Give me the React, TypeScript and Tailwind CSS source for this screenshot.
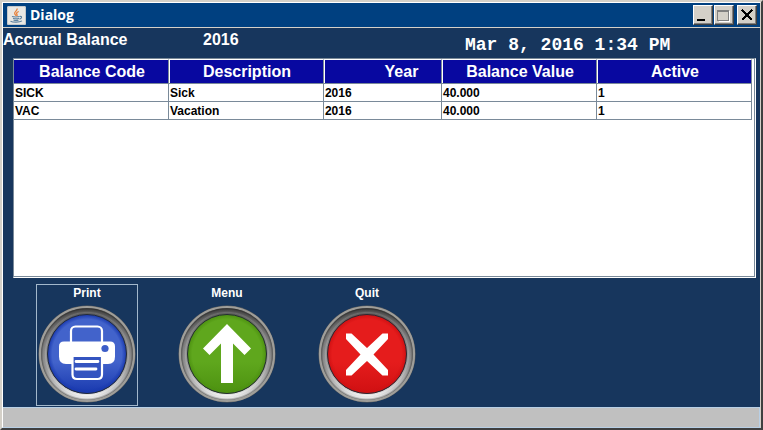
import { useState } from 'react';
import type { ReactNode } from 'react';

interface BalanceRow {
  code: string;
  description: string;
  year: string;
  value: string;
  active: string;
}

const rows: BalanceRow[] = [
  { code: 'SICK', description: 'Sick', year: '2016', value: '40.000', active: '1' },
  { code: 'VAC', description: 'Vacation', year: '2016', value: '40.000', active: '1' },
];

const columns = [
  { key: 'code', label: 'Balance Code', width: 'w-[21%]', pad: 'pl-[2px]' },
  { key: 'description', label: 'Description', width: 'w-[21%]', pad: 'pl-[2px]' },
  { key: 'year', label: 'Year', width: 'w-[16%]', pad: 'pl-[38px]' },
  { key: 'value', label: 'Balance Value', width: 'w-[21%]', pad: 'pl-[2px]' },
  { key: 'active', label: 'Active', width: 'w-[21%]', pad: 'pl-[2px]' },
] as const;

function JavaIcon() {
  return (
    <svg viewBox="0 0 19 19" className="h-[19px] w-[19px]" aria-hidden="true">
      <rect width="19" height="19" rx="1.5" fill="#e9e8e4" />
      <rect x="0.5" y="0.5" width="18" height="18" rx="1.5" fill="none" stroke="#c4c8ca" />
      <path d="M10 2.500c1 2-3 3.200-2.300 5.200.2.800 1 1.300 1.300 2M11.800 5.500c-2.200.8-2.700 1.800-1.800 3 .4.700.1 1.100-.4 1.500" fill="none" stroke="#e8803a" strokeWidth="1.300" />
      <path d="M5 10.500c1.500.6 6 .6 7.500 0M6 12.300c1.600.6 4.500.6 6 0M6.500 14c1.500.6 3.800.6 5 0M12.800 10.500c2.400-.6 2.400 1.900-.3 2.600M3.500 15.200c2.500 1.300 9 1.300 11.500-.3" fill="none" stroke="#5c819f" strokeWidth="1.100" />
    </svg>
  );
}

function WindowButton({ label, children }: { label: string; children: ReactNode }) {
  return (
    <button
      type="button"
      aria-label={label}
      className="h-5 w-5 border border-t-white border-l-white border-r-[#404040] border-b-[#404040] bg-[#d4d0c8] shadow-[inset_-1px_-1px_0_#808080]"
    >
      <svg viewBox="0 0 18 18" className="h-full w-full" shapeRendering="crispEdges">
        {children}
      </svg>
    </button>
  );
}

interface RoundButtonProps {
  id: string;
  label: string;
  light: string;
  dark: string;
  selected: boolean;
  onSelect: () => void;
  children: ReactNode;
}

function RoundButton({ id, label, light, dark, selected, onSelect, children }: RoundButtonProps) {
  return (
    <button
      type="button"
      onClick={onSelect}
      className={`flex w-[102px] flex-col items-center gap-1 border pb-[2px] outline-none ${
        selected ? 'border-[#a3b8cc]' : 'border-transparent'
      }`}
    >
      <span className="text-[12px] leading-4 font-bold text-white">{label}</span>
      <svg viewBox="0 0 98 98" className="h-[98px] w-[98px]" aria-hidden="true">
        <defs>
          <linearGradient id={`${id}-ring`} x1="0" y1="0" x2="0" y2="1">
            <stop offset="0" stopColor="#484848" />
            <stop offset="0.300" stopColor="#7c7c7c" />
            <stop offset="0.650" stopColor="#9c9c9c" />
            <stop offset="0.870" stopColor="#d0d0d0" />
            <stop offset="1" stopColor="#ffffff" />
          </linearGradient>
          <radialGradient id={`${id}-bevel`}>
            <stop offset="0.840" stopColor="#000" stopOpacity="0.100" />
            <stop offset="0.910" stopColor="#fff" stopOpacity="0.150" />
            <stop offset="0.960" stopColor="#000" stopOpacity="0.050" />
            <stop offset="1" stopColor="#000" stopOpacity="0.400" />
          </radialGradient>
          <linearGradient id={`${id}-face`} x1="0" y1="0" x2="0" y2="1">
            <stop offset="0" stopColor={light} />
            <stop offset="0.600" stopColor={light} />
            <stop offset="1" stopColor={dark} />
          </linearGradient>
          <radialGradient id={`${id}-shade`}>
            <stop offset="0.880" stopColor={dark} stopOpacity="0" />
            <stop offset="1" stopColor={dark} />
          </radialGradient>
        </defs>
        <circle cx="49" cy="49" r="48.500" fill="#5d5d5b" />
        <circle cx="49" cy="49" r="47" fill="none" stroke="#9f9e9a" strokeWidth="2.200" />
        <circle cx="49" cy="49" r="45.700" fill={`url(#${id}-ring)`} />
        <circle cx="49" cy="49" r="45.700" fill={`url(#${id}-bevel)`} />
        <circle cx="49" cy="49" r="39.700" fill={`url(#${id}-face)`} />
        <circle cx="49" cy="49" r="39.500" fill={`url(#${id}-shade)`} stroke="#252b35" strokeWidth="1" />
        {children}
      </svg>
    </button>
  );
}

export default function App() {
  const [selected, setSelected] = useState('print');

  return (
    <div className="flex min-h-screen flex-col border-2 border-t-[#d4d0c8] border-r-[#404040] border-b-[#404040] border-l-[#d4d0c8] bg-[#17365d] font-['Liberation_Sans',Arial,sans-serif]">
      <div className="flex flex-1 flex-col border border-t-white border-r-[#d4d0c8] border-b-[#b8cfe5] border-l-white">
        <header className="flex h-[25px] items-center border-b border-[#d4d0c8] bg-[#004080] pr-[3px] pl-1">
          <JavaIcon />
          <h1 className="ml-1 flex-1 font-['Open_Sans',Tahoma,sans-serif] text-[14px] leading-5 font-bold text-white">
            Dialog
          </h1>
          <div className="flex gap-px">
            <WindowButton label="Minimize">
              <rect x="3" y="13" width="8" height="2" fill="#000" />
            </WindowButton>
            <WindowButton label="Maximize">
              <path d="M3.500 15.500h11v-11" fill="none" stroke="#fff" />
              <path d="M2.500 4.500h11v10h-11zM2.500 5.500h11" fill="none" stroke="#808080" />
            </WindowButton>
          </div>
          <div className="ml-[3px] flex">
            <WindowButton label="Close">
              <path d="M4 4l10 10M14 4L4 14" fill="none" stroke="#000" strokeWidth="2" />
            </WindowButton>
          </div>
        </header>

        <div className="grid h-[30px] grid-cols-[200fr_262fr_295fr] text-[16px] leading-6 font-bold text-white">
          <h2>Accrual Balance</h2>
          <span>2016</span>
          <time className="pt-[5px] font-['Liberation_Mono','Courier_New',monospace] text-[18px] leading-6 whitespace-nowrap">
            Mar 8, 2016 1:34 PM
          </time>
        </div>

        <div className="mr-1 ml-[10px] flex flex-1 flex-col border border-t-[#7a8a99] border-r-white border-b-white border-l-[#7a8a99] bg-white">
          <div className="flex-1 border-r border-b border-[#7a8a99] pr-[2px]">
            <table className="w-full table-fixed border-separate border-spacing-0 text-left font-bold">
              <thead>
                <tr>
                  {columns.map((column) => (
                    <th
                      key={column.key}
                      scope="col"
                      className={`${column.width} ${column.pad} h-[25px] border-t border-r border-b border-t-white border-r-[#7a8a99] border-b-[#7a8a99] bg-[#0808a0] p-0 pt-px text-center text-[16px] leading-5 text-white not-first:shadow-[inset_1px_0_0_#fff]`}
                    >
                      {column.label}
                    </th>
                  ))}
                </tr>
              </thead>
              <tbody>
                {rows.map((row) => (
                  <tr key={row.code}>
                    {columns.map((column) => (
                      <td
                        key={column.key}
                        className="h-[18px] border-r border-b border-[#7a8a99] p-0 pt-px pl-px text-[12px] leading-4 text-black"
                      >
                        {row[column.key]}
                      </td>
                    ))}
                  </tr>
                ))}
              </tbody>
            </table>
          </div>
        </div>

        <div className="flex gap-[38px] pt-[6px] pb-px pl-[33px]">
          <RoundButton
            id="print"
            label="Print"
            light="#4263cb"
            dark="#1838ae"
            selected={selected === 'print'}
            onSelect={() => setSelected('print')}
          >
            <rect x="33" y="21.500" width="31" height="32" rx="4.500" fill="none" stroke="#fff" strokeWidth="2.200" />
            <path d="M26 36.500h46q5 0 5 5v10q0 7.500-7 7.500H28q-7 0-7-7.500v-10q0-5 5-5z" fill="#fff" />
            <path d="M34.500 51h29.500v18.500q0 4.500-4.500 4.500H39q-4.500 0-4.500-4.500z" fill="#3454c0" stroke="#fff" strokeWidth="2.200" />
            <path d="M38 56.500h22M38 64h20" stroke="#fff" strokeWidth="2.800" strokeLinecap="round" />
            <circle cx="67" cy="43.500" r="3.600" fill="#3c5dc8" />
          </RoundButton>
          <RoundButton
            id="menu"
            label="Menu"
            light="#5fa71d"
            dark="#4c9110"
            selected={selected === 'menu'}
            onSelect={() => setSelected('menu')}
          >
            <path d="M49 19l24 24.500-6.500 6.500L55 38.500V78H43V38.500L31.500 50 25 43.500z" fill="#fff" />
          </RoundButton>
          <RoundButton
            id="quit"
            label="Quit"
            light="#e51c1c"
            dark="#d01012"
            selected={selected === 'quit'}
            onSelect={() => setSelected('quit')}
          >
            <path d="M28 28.500h5.500L49 43l15.500-14.500H70v5.500L55.500 49.500 70 65v5.500h-5.500L49 56 33.500 70.500H28V65l14.500-15.500L28 34z" fill="#fff" />
          </RoundButton>
        </div>

        <footer className="h-5 border-t border-r border-[#b8cfe5] bg-[#c0c0c0]" />
      </div>
    </div>
  );
}
